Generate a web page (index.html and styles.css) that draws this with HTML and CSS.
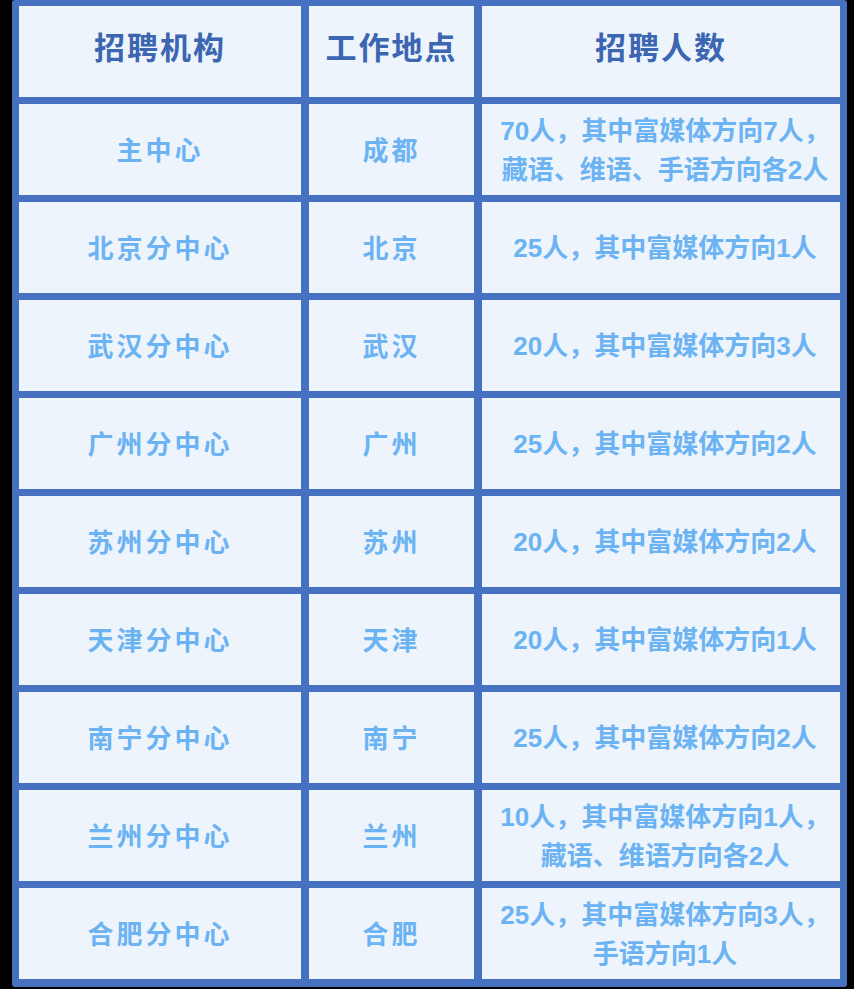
FILE: index.html
```html
<!DOCTYPE html>
<html lang="zh-CN">
<head>
<meta charset="utf-8">
<title>招聘计划</title>
<link rel="stylesheet" href="styles.css">
</head>
<body>
<div class="table">
  <div class="cell head">招聘机构</div>
  <div class="cell head">工作地点</div>
  <div class="cell head">招聘人数</div>

  <div class="cell org">主中心</div>
  <div class="cell city">成都</div>
  <div class="cell num">70人，其中富媒体方向7人，<br>藏语、维语、手语方向各2人</div>

  <div class="cell org">北京分中心</div>
  <div class="cell city">北京</div>
  <div class="cell num">25人，其中富媒体方向1人</div>

  <div class="cell org">武汉分中心</div>
  <div class="cell city">武汉</div>
  <div class="cell num">20人，其中富媒体方向3人</div>

  <div class="cell org">广州分中心</div>
  <div class="cell city">广州</div>
  <div class="cell num">25人，其中富媒体方向2人</div>

  <div class="cell org">苏州分中心</div>
  <div class="cell city">苏州</div>
  <div class="cell num">20人，其中富媒体方向2人</div>

  <div class="cell org">天津分中心</div>
  <div class="cell city">天津</div>
  <div class="cell num">20人，其中富媒体方向1人</div>

  <div class="cell org">南宁分中心</div>
  <div class="cell city">南宁</div>
  <div class="cell num">25人，其中富媒体方向2人</div>

  <div class="cell org">兰州分中心</div>
  <div class="cell city">兰州</div>
  <div class="cell num">10人，其中富媒体方向1人，<br>藏语、维语方向各2人</div>

  <div class="cell org">合肥分中心</div>
  <div class="cell city">合肥</div>
  <div class="cell num">25人，其中富媒体方向3人，<br>手语方向1人</div>
</div>
</body>
</html>
```
FILE: styles.css
```css
html, body {
  margin: 0;
  padding: 0;
  background: #000;
}

body {
  width: 854px;
  height: 989px;
  overflow: hidden;
  font-family: "Liberation Sans", "Noto Sans CJK SC", sans-serif;
  font-weight: bold;
}

.table {
  margin-left: 12px;
  width: max-content;
  display: grid;
  grid-template-columns: 282px 165px 358px;
  grid-auto-rows: 91px;
  gap: 7px 8px;
  padding: 6px 7px 8px 7px;
  background: #4671c0;
  border-radius: 3px;
}

.cell {
  background: #eef4fb;
  display: flex;
  align-items: center;
  justify-content: center;
  text-align: center;
  color: #6cb3f3;
  font-size: 26px;
  line-height: 39px;
  box-sizing: border-box;
  padding-top: 3px;
}

.head {
  color: #3c66b1;
  font-size: 31px;
  letter-spacing: 2px;
  padding-top: 0;
  padding-bottom: 6px;
}

.org, .city {
  letter-spacing: 3px;
}

.num {
  letter-spacing: 0;
  padding-top: 2px;
  padding-left: 8px;
}
```
